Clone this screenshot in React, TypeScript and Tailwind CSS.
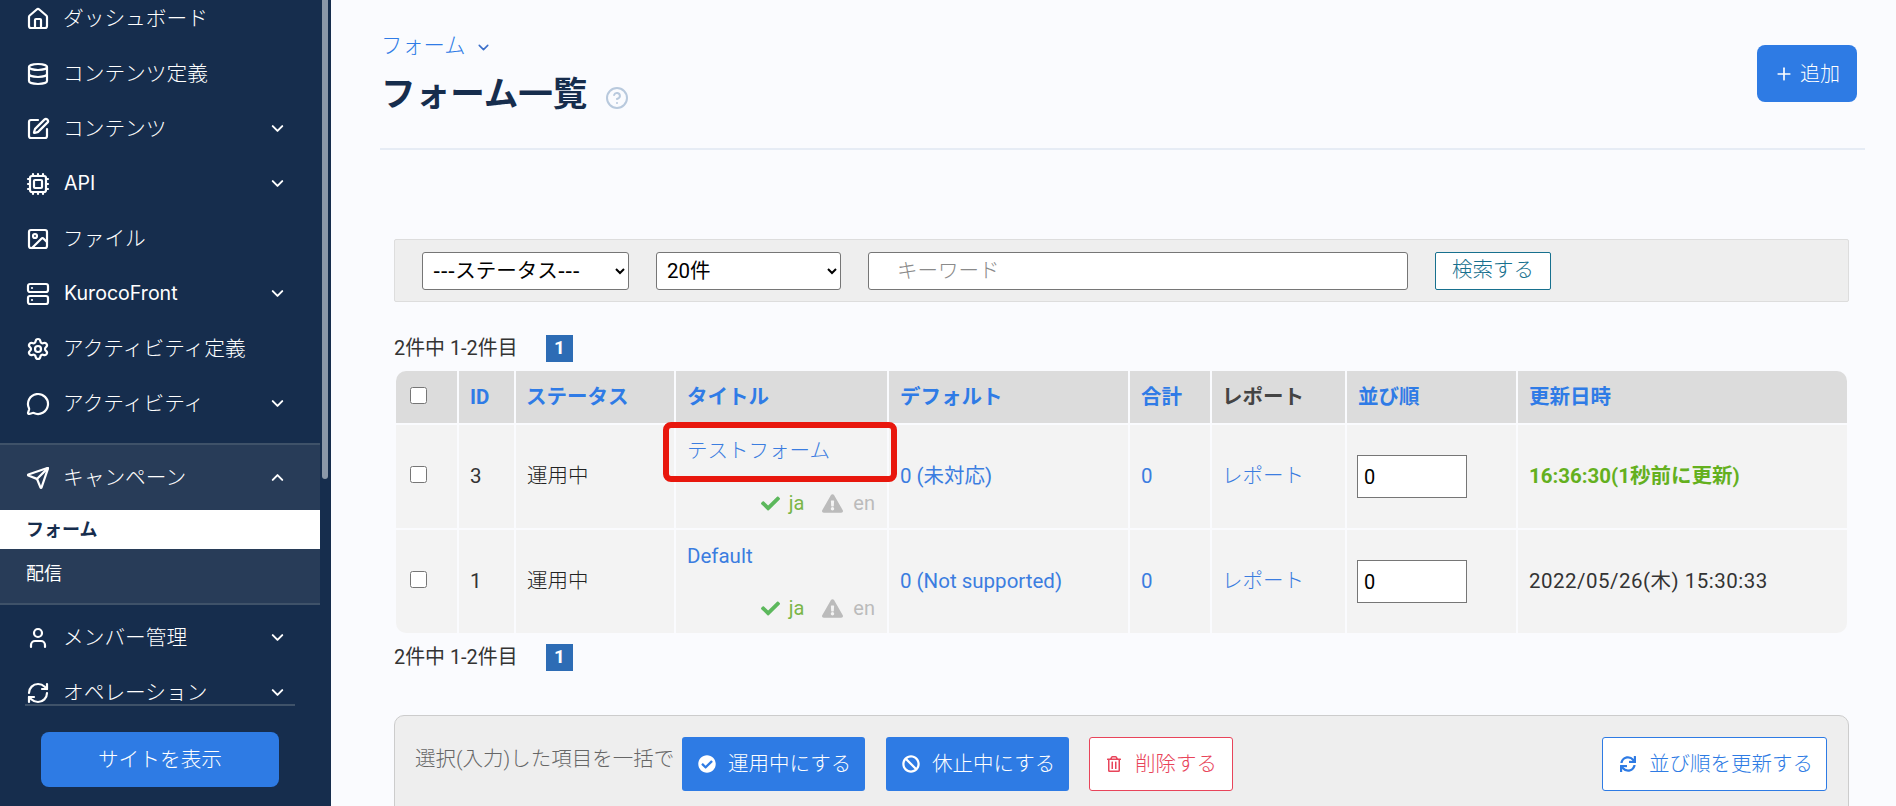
import React from "react";
import {
  House, Database, SquarePen, Cpu, Image, Server, Settings, MessageCircle, Send, User, RefreshCw,
  ChevronDown, ChevronUp, CircleHelp, Plus,
} from "lucide-react";
import { FaCheck, FaExclamationTriangle, FaCheckCircle, FaBan, FaRegTrashAlt, FaSync } from "react-icons/fa";

const NavRow = ({ icon: Icon, label, chevron, latin }: { icon: any; label: string; chevron?: boolean; latin?: boolean }) => (
  <div className="flex h-[55px] shrink-0 items-center pl-[26px] pr-[33px] text-[20.7px] text-white">
    <Icon size={24} strokeWidth={2.2} className="shrink-0" />
    <span className={latin ? "ml-[14px] flex-1 whitespace-nowrap text-[19.6px] font-normal" : "ml-[13px] flex-1 whitespace-nowrap font-light"}>{label}</span>
    {chevron && <ChevronDown size={19} strokeWidth={2.5} />}
  </div>
);

const Pager = () => (
  <div className="flex h-[27px] items-center text-[19.9px] text-[#333]">
    <span className="w-[152px] whitespace-nowrap">2件中 1-2件目</span>
    <span className="flex h-[27px] w-[27px] items-center justify-center bg-[#2d6cb5] text-[19px] font-bold text-white">1</span>
  </div>
);

const Langs = () => (
  <div className="mt-[28px] flex h-[24px] items-center justify-end pr-[12px] text-[20px]">
    <FaCheck size={19} className="text-[#5cb85c]" />
    <span className="ml-[9px] text-[#7ab648]">ja</span>
    <FaExclamationTriangle size={21} className="ml-[18px] text-[#bbbbbb]" />
    <span className="ml-[10px] text-[#bbbbbb]">en</span>
  </div>
);

const th = "border-l-2 border-[#fafbfe] bg-[#dcdcdc] px-[11px] text-left font-bold text-[#2f7be6] whitespace-nowrap";
const td = "border-l-2 border-t-2 border-[#fafbfe] bg-[#f3f3f3] px-[11px] whitespace-nowrap";

const Row = ({ id, title, titleClass, def, updated, highlight }: { id: string; title: string; titleClass?: string; def: string; updated: React.ReactNode; highlight?: boolean }) => (
  <tr>
    <td className="border-t-2 border-[#fafbfe] bg-[#f3f3f3] pl-[14px]">
      <input type="checkbox" className="mb-[4px] block h-[17px] w-[17px]" />
    </td>
    <td className={td + " text-[#333]"}>{id}</td>
    <td className={td + " font-light text-[#222]"}>運用中</td>
    <td className={td + " relative !px-0"}>
      <div className="flex flex-col pb-[13px] pt-[14px]">
        <a className={"h-[24px] pl-[11px] leading-[24px] text-[#3b7de0] " + (titleClass ?? "")}>{title}</a>
        <Langs />
      </div>
      {highlight && (
        <div className="absolute left-[-13px] top-[-3px] h-[60px] w-[234px] rounded-[8px] border-[6px] border-[#e8170d]" />
      )}
    </td>
    <td className={td + " text-[#3b7de0]"}>{def}</td>
    <td className={td + " text-[#3b7de0]"}>0</td>
    <td className={td + " !pl-[10px] font-light text-[#3b7de0]"}>レポート</td>
    <td className={td + " !pl-[10px]"}>
      <input
        defaultValue="0"
        className="block h-[43px] w-[110px] border border-[#767676] bg-white pl-[6px] text-[20px] text-black"
      />
    </td>
    <td className={td}>{updated}</td>
  </tr>
);

export default function App() {
  return (
    <div className="flex h-[806px] w-[1896px] overflow-hidden bg-[#fafbfe] font-['Roboto','Noto_Sans_CJK_JP',sans-serif] text-[20.5px]">
      <aside className="flex h-full w-[331px] shrink-0 flex-col bg-[#162d4d] font-['Inter','Noto_Sans_CJK_JP',sans-serif]">
        <div className="flex h-[704px] shrink-0 overflow-hidden">
          <nav className="mt-[-9px] flex w-[320px] shrink-0 flex-col">
            <NavRow icon={House} label="ダッシュボード" />
            <NavRow icon={Database} label="コンテンツ定義" />
            <NavRow icon={SquarePen} label="コンテンツ" chevron />
            <NavRow icon={Cpu} label="API" chevron latin />
            <NavRow icon={Image} label="ファイル" />
            <NavRow icon={Server} label="KurocoFront" chevron latin />
            <NavRow icon={Settings} label="アクティビティ定義" />
            <NavRow icon={MessageCircle} label="アクティビティ" chevron />
            <div className="mb-[5px] mt-[12px] flex h-[162px] shrink-0 flex-col border-y-2 border-[#3f5269] bg-[#283c58]">
              <div className="flex h-[65px] shrink-0 items-center pl-[26px] pr-[33px] text-[20.7px] text-white">
                <Send size={24} strokeWidth={2.2} />
                <span className="ml-[13px] flex-1 font-light">キャンペーン</span>
                <ChevronUp size={19} strokeWidth={2.5} />
              </div>
              <div className="flex h-[39px] shrink-0 items-center bg-white pl-[26px] text-[18px] font-bold text-[#162d4d]">フォーム</div>
              <div className="flex h-[48px] shrink-0 items-center pl-[26px] text-[18px] text-white">配信</div>
            </div>
            <NavRow icon={User} label="メンバー管理" chevron />
            <NavRow icon={RefreshCw} label="オペレーション" chevron />
          </nav>
          <div className="ml-[2px] h-[479px] w-[6px] shrink-0 rounded-b-[3px] bg-[#8a97a8]" />
        </div>
        <div className="mx-[25px] h-[2px] w-[270px] shrink-0 bg-[#3f5269]" />
        <button className="ml-[41px] mt-[26px] flex h-[55px] w-[238px] items-center justify-center rounded-[8px] bg-[#2e7be4] text-[20.7px] font-light text-white">
          サイトを表示
        </button>
      </aside>

      <main className="min-w-0 flex-1 pl-[49px] pr-[31px]">
        <header className="flex h-[150px] justify-between border-b-2 border-[#e6ecf5]">
          <div className="pl-[1px] pt-[31px]">
            <div className="flex h-[30px] items-center text-[21.3px] font-light text-[#2f7be6]">
              フォーム
              <ChevronDown size={17} strokeWidth={2.2} className="ml-[9px] mt-[3px] text-[#3b6fc9]" />
            </div>
            <h1 className="mt-[12px] flex h-[44px] items-center text-[34.6px] font-bold text-[#162d4d]">
              フォーム一覧
              <CircleHelp size={24} strokeWidth={2} className="ml-[18px] mt-[5px] text-[#b8c9dd]" />
            </h1>
          </div>
          <button className="mr-[8px] mt-[45px] flex h-[57px] w-[100px] items-center justify-center rounded-[8px] bg-[#2e7be4] text-[20px] font-light text-white">
            <Plus size={20} strokeWidth={2} className="mr-[6px]" />
            追加
          </button>
        </header>

        <div className="ml-[14px] mr-[16px] mt-[89px] flex h-[63px] items-center rounded-[2px] border border-[#dddddd] bg-[#eeeeee] pl-[27px]">
          <select className="h-[38px] w-[207px] rounded-[3px] border border-[#767676] bg-white pl-[6px] font-['DejaVu_Sans','Noto_Sans_CJK_JP',sans-serif] text-[20.5px] text-black">
            <option>---ステータス---</option>
          </select>
          <select className="ml-[27px] h-[38px] w-[185px] rounded-[3px] border border-[#767676] bg-white pl-[6px] text-[20.5px] text-black">
            <option>20件</option>
          </select>
          <input
            placeholder="キーワード"
            className="ml-[27px] h-[38px] w-[540px] rounded-[3px] border border-[#767676] bg-white pl-[28px] text-[20.5px] font-light placeholder:text-[#8a8a8a]"
          />
          <button className="ml-[27px] h-[38px] w-[116px] rounded-[2px] border border-[#17708e] bg-white text-[20.5px] font-light text-[#17708e]">
            検索する
          </button>
        </div>

        <div className="ml-[14px] mt-[33px]"><Pager /></div>

        <div className="ml-[16px] mr-[18px] mt-[9px] overflow-hidden rounded-[10px]">
          <table className="w-[1451px] table-fixed border-separate border-spacing-0">
            <colgroup>
              <col className="w-[61px]" />
              <col className="w-[57px]" />
              <col className="w-[160px]" />
              <col className="w-[213px]" />
              <col className="w-[241px]" />
              <col className="w-[82px]" />
              <col className="w-[135px]" />
              <col className="w-[171px]" />
              <col className="w-[331px]" />
            </colgroup>
            <thead>
              <tr className="h-[52px]">
                <th className="bg-[#dcdcdc] pl-[14px]">
                  <input type="checkbox" className="mb-[4px] block h-[17px] w-[17px]" />
                </th>
                <th className={th}>ID</th>
                <th className={th + " !pl-[10px]"}>ステータス</th>
                <th className={th}>タイトル</th>
                <th className={th}>デフォルト</th>
                <th className={th}>合計</th>
                <th className={th + " !pl-[10px] !text-[#444]"}>レポート</th>
                <th className={th}>並び順</th>
                <th className={th}>更新日時</th>
              </tr>
            </thead>
            <tbody>
              <Row
                id="3"
                title="テストフォーム"
                titleClass="font-light"
                def="0 (未対応)"
                highlight
                updated={<span className="font-bold text-[#64b01e]">16:36:30(1秒前に更新)</span>}
              />
              <Row
                id="1"
                title="Default"
                def="0 (Not supported)"
                updated={<span className="text-[#333] tracking-[0.5px]">2022/05/26(木) 15:30:33</span>}
              />
            </tbody>
          </table>
        </div>

        <div className="ml-[14px] mt-[11px]"><Pager /></div>

        <div className="ml-[14px] mr-[16px] mt-[44px] flex h-[110px] items-start rounded-t-[10px] border border-[#cccccc] bg-[#eeeeee] pl-[20px] pr-[21px] pt-[21px]">
          <span className="mt-[7px] w-[267px] whitespace-nowrap text-[20.5px] font-light text-[#666666]">選択(入力)した項目を一括で</span>
          <button className="flex h-[54px] w-[183px] items-center rounded-[3px] bg-[#2e7be4] pl-[16px] text-white">
            <FaCheckCircle size={18} />
            <span className="ml-[12px] font-light">運用中にする</span>
          </button>
          <button className="ml-[21px] flex h-[54px] w-[183px] items-center rounded-[3px] bg-[#2e7be4] pl-[16px] text-white">
            <FaBan size={18} />
            <span className="ml-[12px] font-light">休止中にする</span>
          </button>
          <button className="ml-[20px] flex h-[54px] w-[144px] items-center rounded-[3px] border border-[#e8445a] bg-white pl-[16px] text-[#e8445a]">
            <FaRegTrashAlt size={16} />
            <span className="ml-[13px] font-light">削除する</span>
          </button>
          <button className="ml-auto flex h-[54px] w-[225px] items-center rounded-[3px] border border-[#2e7be4] bg-white pl-[17px] text-[#2e7be4]">
            <FaSync size={16} />
            <span className="ml-[13px] font-light">並び順を更新する</span>
          </button>
        </div>
      </main>
    </div>
  );
}
